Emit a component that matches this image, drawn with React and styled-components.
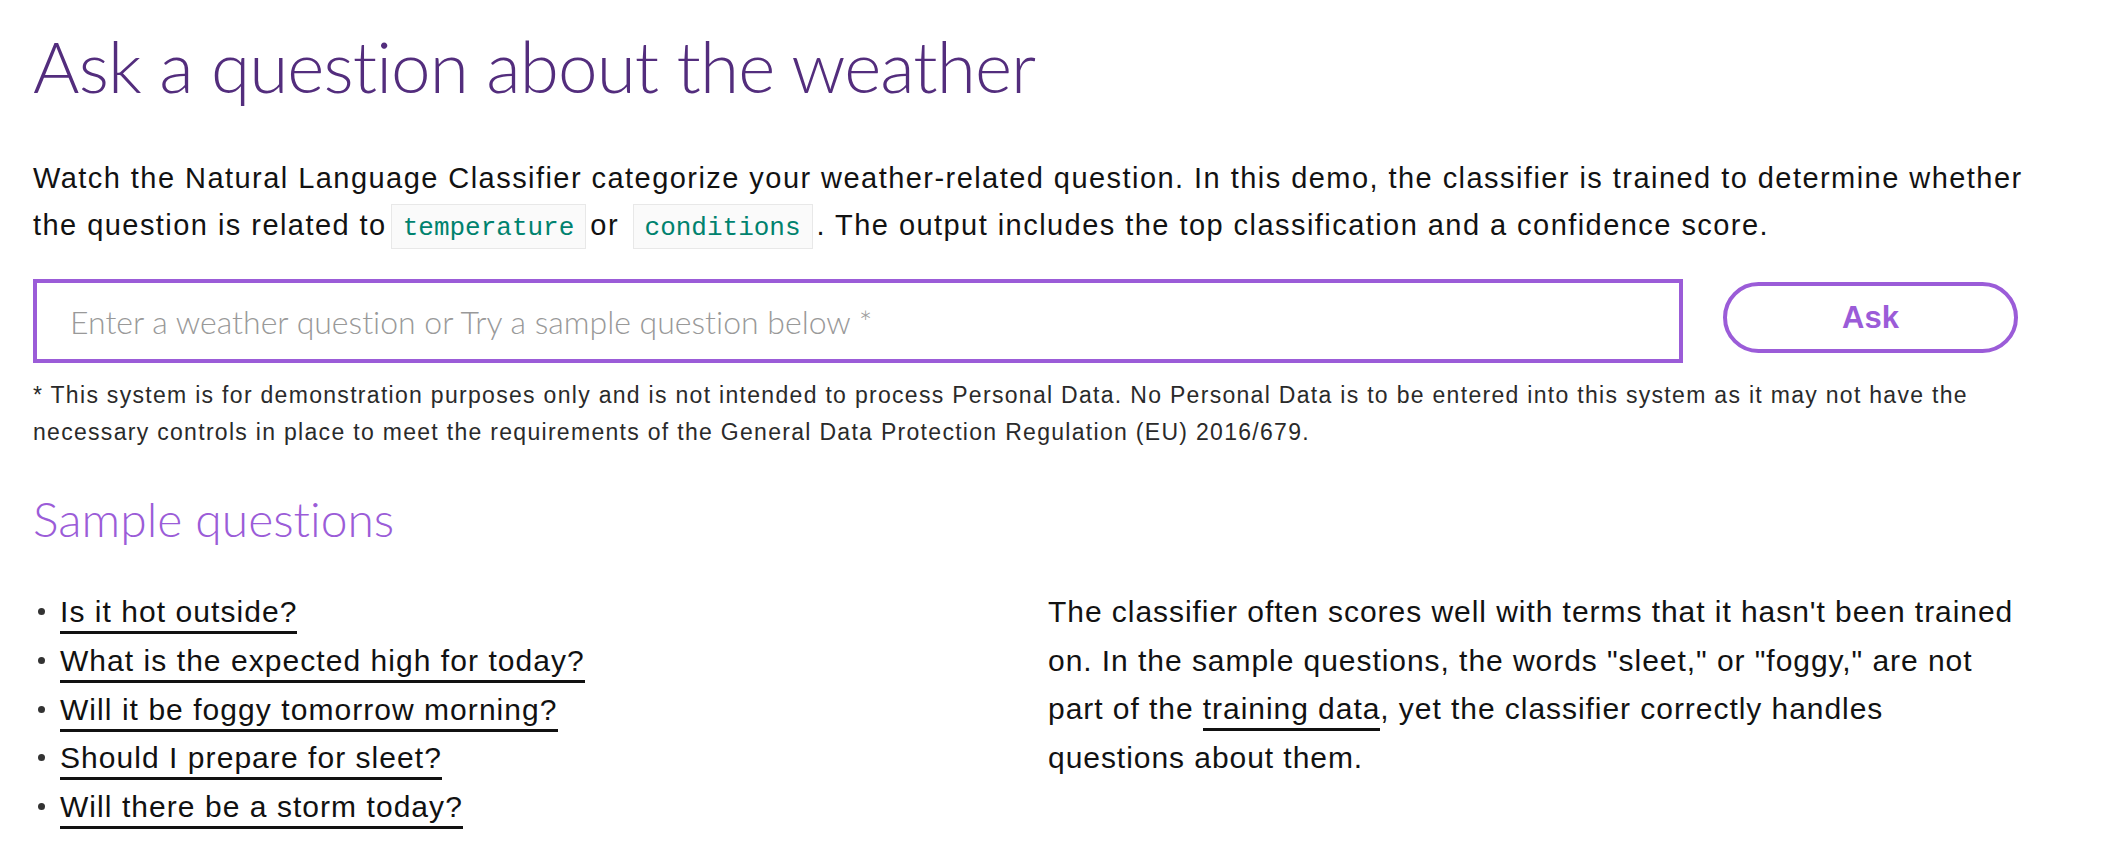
import React, { useState } from "react";
import styled, { createGlobalStyle } from "styled-components";

const SAMPLES = [
  "Is it hot outside?",
  "What is the expected high for today?",
  "Will it be foggy tomorrow morning?",
  "Should I prepare for sleet?",
  "Will there be a storm today?"
];

export default function App() {
  const [question, setQuestion] = useState("");

  return (
    <>
      <GlobalStyle />
      <Page>
        <Title>Ask a question about the weather</Title>
        <Intro>
          Watch the Natural Language Classifier categorize your weather-related
          question. In this demo, the classifier is trained to determine whether
          the question is related to<Code>temperature</Code>or{" "}
          <Code>conditions</Code>. The output includes the top classification
          and a confidence score.
        </Intro>
        <AskRow onSubmit={e => e.preventDefault()}>
          <QuestionInput
            value={question}
            onChange={e => setQuestion(e.target.value)}
            placeholder="Enter a weather question or Try a sample question below *"
          />
          <AskButton type="submit">Ask</AskButton>
        </AskRow>
        <Disclaimer>
          * This system is for demonstration purposes only and is not intended
          to process Personal Data. No Personal Data is to be entered into this
          system as it may not have the necessary controls in place to meet the
          requirements of the General Data Protection Regulation (EU) 2016/679.
        </Disclaimer>
        <SectionTitle>Sample questions</SectionTitle>
        <Columns>
          <QuestionList>
            {SAMPLES.map(q => (
              <QuestionItem key={q}>
                <UnderlineLink onClick={() => setQuestion(q)}>{q}</UnderlineLink>
              </QuestionItem>
            ))}
          </QuestionList>
          <Notes>
            The classifier often scores well with terms that it hasn't been
            trained on. In the sample questions, the words "sleet," or "foggy,"
            are not part of the <UnderlineLink>training data</UnderlineLink>, yet
            the classifier correctly handles questions about them.
          </Notes>
        </Columns>
      </Page>
    </>
  );
}

const purple = "#9b5cd8";

const GlobalStyle = createGlobalStyle`
  body {
    margin: 0;
    background: #fff;
    color: #121212;
    font-family: "Liberation Sans", Arial, sans-serif;
  }
`;

const Page = styled.main`
  width: 1985px;
  padding: 23px 0 0 33px;
`;

const Title = styled.h1`
  margin: 0;
  font-family: Lato, "Liberation Sans", sans-serif;
  font-weight: 300;
  font-size: 71px;
  line-height: 86px;
  letter-spacing: -0.9px;
  font-variant-ligatures: none;
  color: #532d7d;
`;

const Intro = styled.p`
  width: 2010px;
  margin: 46px 0 0;
  font-size: 29px;
  line-height: 46.7px;
  letter-spacing: 1.45px;
`;

const Code = styled.code`
  margin: 0 4px;
  padding: 8px 11px 5px;
  font-family: "Liberation Mono", monospace;
  font-size: 26px;
  letter-spacing: 0;
  color: #00826e;
  background: #fafafa;
  border: 1px solid #e8e8e8;
`;

const AskRow = styled.form`
  display: flex;
  align-items: flex-start;
  gap: 40px;
  margin-top: 28px;
`;

const QuestionInput = styled.input`
  flex: 1;
  height: 84px;
  box-sizing: border-box;
  padding: 0 33px;
  border: 4px solid ${purple};
  border-radius: 0;
  outline: none;
  font-family: Lato, "Liberation Sans", sans-serif;
  font-weight: 300;
  font-size: 32px;
  font-variant-ligatures: none;
  color: #333;

  &::placeholder {
    color: #999;
  }
`;

const AskButton = styled.button`
  width: 295px;
  height: 71px;
  margin-top: 3px;
  box-sizing: border-box;
  border: 4px solid ${purple};
  border-radius: 36px;
  background: #fff;
  color: ${purple};
  font-family: "Liberation Sans", Arial, sans-serif;
  font-weight: 700;
  font-size: 31px;
  cursor: pointer;
`;

const Disclaimer = styled.p`
  margin: 14px 0 0;
  font-size: 23px;
  line-height: 36.7px;
  letter-spacing: 1.3px;
  color: #2a2a2a;
`;

const SectionTitle = styled.h2`
  margin: 39px 0 0;
  font-family: Lato, "Liberation Sans", sans-serif;
  font-weight: 300;
  font-size: 48px;
  line-height: 57.6px;
  font-variant-ligatures: none;
  color: ${purple};
`;

const Columns = styled.div`
  display: grid;
  grid-template-columns: 970px 980px;
  column-gap: 45px;
  margin-top: 41px;
`;

const QuestionList = styled.ul`
  margin: 0;
  padding: 0;
  list-style: none;
`;

const QuestionItem = styled.li`
  font-size: 30px;
  line-height: 48.6px;
  letter-spacing: 1.05px;

  &::before {
    content: "";
    display: inline-block;
    width: 7px;
    height: 7px;
    margin: 0 15px 0 5px;
    border-radius: 50%;
    background: #333;
    vertical-align: 7px;
  }
`;

const UnderlineLink = styled.a`
  padding-bottom: 3px;
  color: #111;
  text-decoration: none;
  border-bottom: 3px solid #111;
  cursor: pointer;
`;

const Notes = styled.p`
  margin: 0;
  font-size: 30px;
  line-height: 48.4px;
  letter-spacing: 0.95px;
`;
